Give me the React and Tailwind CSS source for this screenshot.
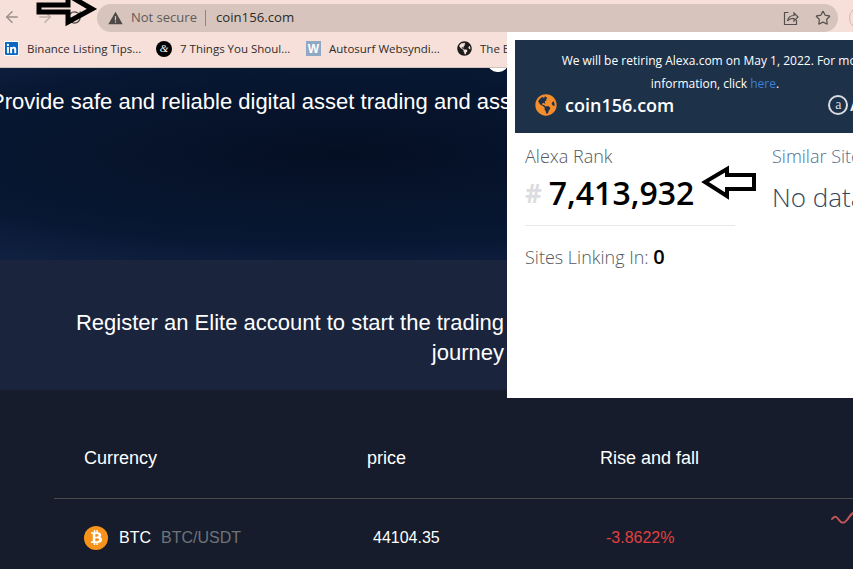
import { ArrowLeft, ArrowRight, RotateCw, Star } from 'lucide-react';
import { FaBtc, FaGlobeAmericas, FaLinkedin } from 'react-icons/fa';

const BOOKMARKS = [
  { label: 'Binance Listing Tips...', icon: <FaLinkedin className="text-[#0a66c2] bg-white w-[15px] h-[15px]" />, width: 'w-[152px]' },
  {
    label: '7 Things You Shoul...',
    icon: (
      <span className="w-[16px] h-[16px] rounded-full bg-black text-white flex items-center justify-center text-[11px] italic font-['Liberation_Serif',serif]">
        &amp;
      </span>
    ),
    width: 'w-[150px]',
  },
  {
    label: 'Autosurf Websyndi...',
    icon: (
      <span className="w-[15px] h-[15px] bg-[#8fa9c4] text-white flex items-center justify-center text-[12px] font-bold font-['Liberation_Sans',sans-serif]">
        W
      </span>
    ),
    width: 'w-[151px]',
  },
  { label: 'The Block Crypto', icon: <FaGlobeAmericas className="text-[#1c1c1c] w-[15px] h-[15px]" />, width: 'w-[150px]' },
];

function BlockArrow({ className, viewBox, points, strokeWidth }) {
  return (
    <svg className={className} viewBox={viewBox} fill="none">
      <polygon points={points} stroke="#000" strokeWidth={strokeWidth} strokeLinejoin="miter" />
    </svg>
  );
}

function BrowserBar() {
  return (
    <div className="bg-[#f6e0d9] h-[68px] border-b border-[#cfc2bc] font-['Open_Sans',sans-serif] overflow-hidden">
      <div className="h-[32px] flex items-center">
        <div className="w-[97px] shrink-0 flex items-center text-[#9b8f8b] mt-[2px]">
          <ArrowLeft className="w-[18px] h-[18px] ml-[3px]" strokeWidth={2} />
          <ArrowRight className="w-[18px] h-[18px] ml-[15px] opacity-60" strokeWidth={2} />
          <RotateCw className="w-[15px] h-[15px] ml-[13px] text-[#4a4543]" strokeWidth={2} />
        </div>
        <div className="w-[741px] shrink-0 h-[28px] mt-[3px] rounded-full bg-[#d7c5bd] flex items-center pl-[11px] pr-[7px] text-[13px]">
          <svg className="w-[15px] h-[14px] text-[#4d4946]" viewBox="0 0 24 22" fill="currentColor">
            <path d="M12 1 23.5 21H.5Z" />
            <rect x="11" y="8" width="2" height="7" fill="#d7c5bd" />
            <rect x="11" y="16.500" width="2" height="2" fill="#d7c5bd" />
          </svg>
          <span className="ml-[8px] text-[#5f5a58]">Not secure</span>
          <span className="ml-[8px] w-px h-[16px] bg-[#8f8480]" />
          <span className="ml-[10px] text-[13.2px] text-[#2b2a2a]">coin156.com</span>
          <div className="ml-auto flex items-center gap-[16px] text-[#55504d]">
            <svg className="w-[16px] h-[16px]" viewBox="0 0 16 16" fill="none" stroke="currentColor" strokeWidth="1.2">
              <path d="M5.500 2.500H1.500v12h12V10" />
              <path d="M4.500 11c.5-3.500 3-5.500 6.500-5.500V3l4 4-4 4V8.500C8.500 8.300 6 9 4.500 11Z" />
            </svg>
            <Star className="w-[16px] h-[16px]" strokeWidth={1.8} />
          </div>
        </div>
        <span className="w-[24px] h-[24px] rounded-full border border-[#cdbcb4] ml-[11px] mt-[3px] shrink-0" />
      </div>
      <div className="h-[33px] flex items-center pl-[4px] text-[11.5px] text-[#2d2c2c] whitespace-nowrap">
        {BOOKMARKS.map((b) => (
          <div key={b.label} className={`flex items-center gap-[8px] shrink-0 ${b.width}`}>
            {b.icon}
            <span>{b.label}</span>
          </div>
        ))}
      </div>
    </div>
  );
}

function AlexaPopup() {
  return (
    <div className="absolute left-[507px] top-[32px] w-[346px] h-[366px] bg-white pl-[8px] pt-[8px] overflow-hidden font-['Open_Sans',sans-serif]">
      <div className="w-[400px] h-[93px] bg-[#1d3149] text-white">
        <p className="text-center text-[12px] leading-[23px] pt-[9px]">
          We will be retiring Alexa.com on May 1, 2022. For more
          <br />
          information, click <span className="text-[#3d7fd6]">here</span>.
        </p>
        <div className="flex items-center mt-[-2px] pl-[20px] whitespace-nowrap">
          <FaGlobeAmericas className="w-[22px] h-[22px] text-[#f58d2c] shrink-0" />
          <span className="ml-[8px] text-[18px] font-semibold leading-[24px]">coin156.com</span>
          <span className="ml-[154px] shrink-0 w-[20px] h-[20px] rounded-full border-2 border-[#d8dde2] text-[#d8dde2] flex items-center justify-center text-[14px] leading-none font-['Liberation_Serif',serif]">
            a
          </span>
          <span className="ml-[2px] text-[16px] font-semibold">Alexa</span>
        </div>
      </div>
      <div className="flex pl-[10px] mt-[11px]">
        <div className="w-[210px] shrink-0">
          <p className="text-[18px] leading-[24px] text-[#55595e] font-light">Alexa Rank</p>
          <p className="flex items-center h-[44px] mt-[3px] whitespace-nowrap">
            <span className="text-[26px] font-bold text-[#dcdde1]">#</span>
            <span className="ml-[7px] text-[32px] font-semibold text-black">7,413,932</span>
          </p>
          <div className="border-t border-[#e8e8e8] mt-[10px]" />
          <p className="mt-[19px] text-[18px] leading-[24px] text-[#55595e] font-light whitespace-nowrap">
            Sites Linking In: <span className="text-[20px] font-semibold text-black">0</span>
          </p>
        </div>
        <div className="ml-[37px] shrink-0 whitespace-nowrap">
          <p className="text-[18px] leading-[24px] text-[#4f6f8f] font-light">Similar Sites</p>
          <p className="text-[26px] leading-[44px] mt-[7px] text-[#33475b] font-light">No data</p>
        </div>
      </div>
    </div>
  );
}

function CoinTable() {
  return (
    <div className="flex-1 bg-[#161c2b] text-white overflow-hidden">
      <div className="flex items-center h-[108px] pt-[28px] pl-[84px] text-[18px]">
        <span className="w-[283px]">Currency</span>
        <span className="w-[233px]">price</span>
        <span>Rise and fall</span>
      </div>
      <div className="ml-[54px] border-t border-[#4a4a4a]" />
      <div className="flex items-center h-[77px] pl-[84px] text-[16px] relative">
        <div className="w-[289px] flex items-center">
          <span className="w-[24px] h-[24px] rounded-full bg-[#f7931a] flex items-center justify-center">
            <FaBtc className="w-[15px] h-[15px] text-white" />
          </span>
          <span className="ml-[11px]">BTC</span>
          <span className="ml-[10px] text-[#6f7379]">BTC/USDT</span>
        </div>
        <span className="w-[233px]">44104.35</span>
        <span className="text-[#e0403f]">-3.8622%</span>
        <svg className="absolute left-[831px] top-[12px] w-[22px] h-[16px]" viewBox="0 0 22 16" fill="none">
          <path d="M1 8c3-4 5-2 7 1s5 4 8 0 4-6 6-7" stroke="#c2565a" strokeWidth="2" strokeLinecap="round" />
        </svg>
      </div>
    </div>
  );
}

export default function App() {
  return (
    <div className="relative w-[853px] h-[569px] overflow-hidden flex flex-col font-['Liberation_Sans',sans-serif]">
      <BrowserBar />

      {/* Hero */}
      <div className="h-[192px] bg-[radial-gradient(ellipse_at_40%_45%,#050f24_0%,#081833_60%,#16264b_100%)] text-white relative overflow-hidden">
        <p className="text-[22px] leading-[28px] pt-[20px] ml-[-10px] whitespace-nowrap">
          Provide safe and reliable digital asset trading and asset
        </p>
        <span className="absolute left-[488px] top-[-14px] w-[20px] h-[18px] rounded-full bg-white" />
      </div>

      {/* Register band */}
      <div className="h-[130px] bg-[#1a243c] text-white text-[22px] leading-[30px] text-right pr-[349px] pt-[48px]">
        Register an Elite account to start the trading
        <br />
        journey
      </div>

      <CoinTable />

      <AlexaPopup />

      <BlockArrow
        className="absolute left-[30px] top-0 w-[75px] h-[32px]"
        viewBox="0 0 75 32"
        points="9,5 38,5 38,-5 62,9 38,22 38,12 9,12"
        strokeWidth="5"
      />
      <BlockArrow
        className="absolute left-[695px] top-[160px] w-[70px] h-[45px]"
        viewBox="0 0 70 45"
        points="32,9 32,15 59,15 59,29 32,29 32,36 10,22"
        strokeWidth="4"
      />
    </div>
  );
}
